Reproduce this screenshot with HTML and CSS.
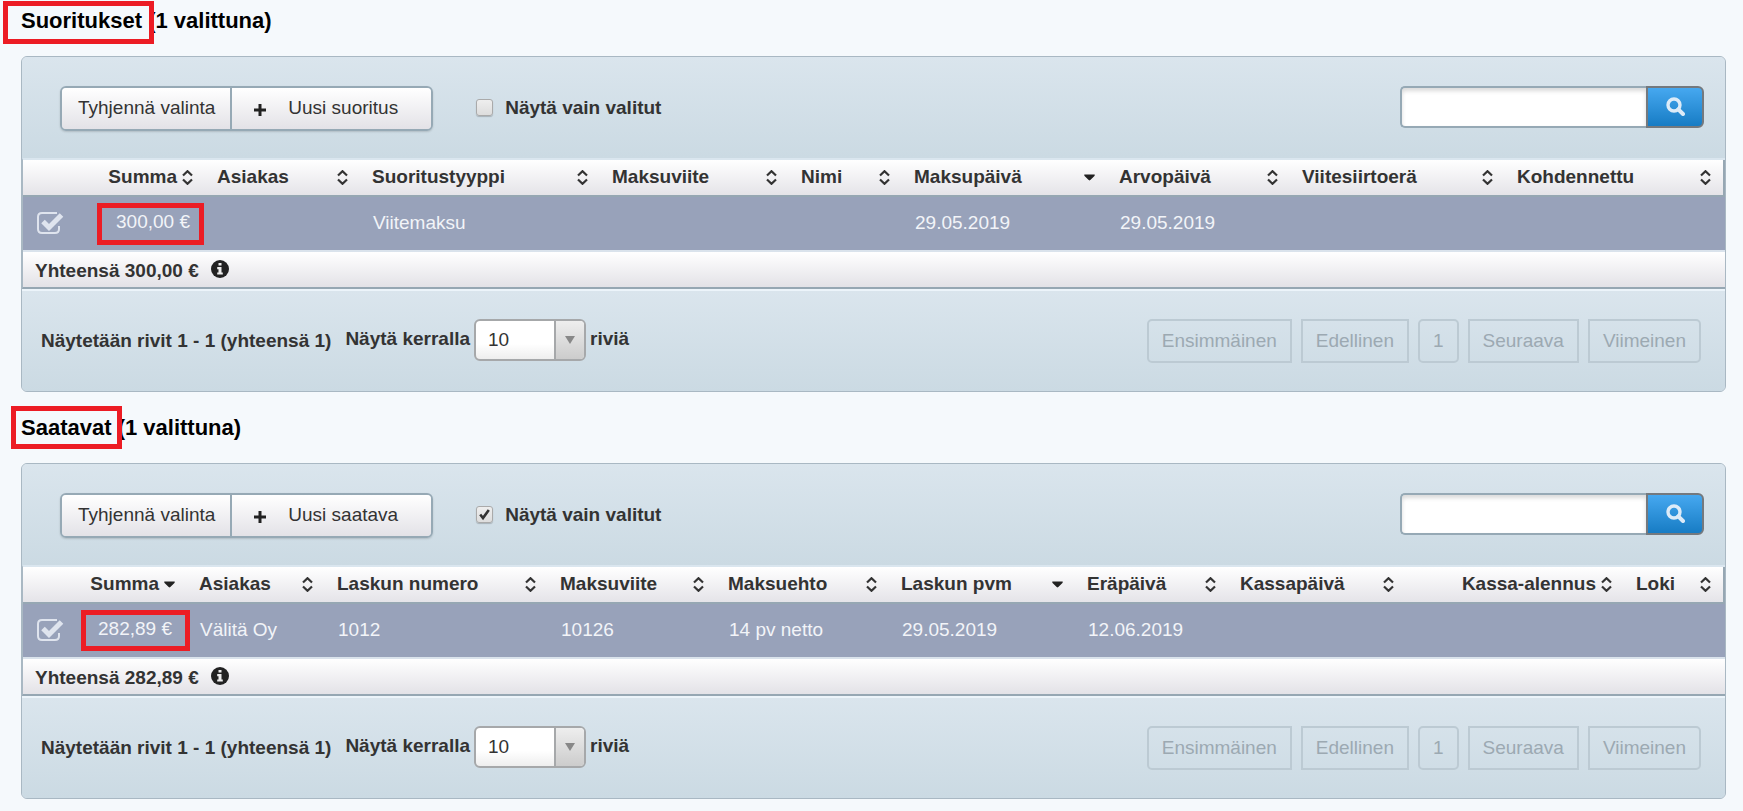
FILE: index.html
```
<!DOCTYPE html>
<html lang="fi">

<head>
    <meta charset="UTF-8">
    <meta name="viewport" content="width=device-width, initial-scale=1.0">
    <title>Suoritukset ja saatavat</title>
    <link rel="stylesheet" href="styles.css">
</head>

<body>
    <svg class="symbols" aria-hidden="true">
        <symbol id="icon-sort" viewBox="0 0 11 15">
            <path d="M1 5.5 L5.5 1.2 L10 5.5 M1 9.5 L5.5 13.8 L10 9.5" fill="none" stroke="#333" stroke-width="2.2" />
        </symbol>
        <symbol id="icon-sorted" viewBox="0 0 11 15">
            <path d="M0.3 4.5 H10.7 Q11 5.5 10.2 6.2 L6.3 10 Q5.5 10.8 4.7 10 L0.8 6.2 Q0 5.5 0.3 4.5Z" fill="#222" />
        </symbol>
        <symbol id="icon-plus" viewBox="0 0 12 12">
            <path d="M6 0 V12 M0 6 H12" fill="none" stroke="#222" stroke-width="3" />
        </symbol>
        <symbol id="icon-search" viewBox="0 0 19 19">
            <circle cx="8" cy="8" r="6" fill="none" stroke="#dcebf8" stroke-width="3.4" />
            <path d="M12.3 12.3 L17 17" stroke="#dcebf8" stroke-width="4" stroke-linecap="round" />
        </symbol>
        <symbol id="icon-info" viewBox="0 0 18 18">
            <circle cx="9" cy="9" r="9" fill="#222" />
            <path d="M7.5 3 H10.5 V5.6 H7.5Z M6.2 7 H10.5 V12.4 H11.8 V14.6 H6.2 V12.4 H7.5 V9.2 H6.2Z" fill="#eee" />
        </symbol>
    </svg>

    <section class="list">
        <h2><span class="mark mark-title">Suoritukset</span> (1 valittuna)</h2>
        <div class="panel">
            <div class="toolbar">
                <div class="button-group">
                    <button type="button">Tyhjennä valinta</button>
                    <button type="button" class="new"><svg class="plus"><use href="#icon-plus" /></svg>Uusi suoritus</button>
                </div>
                <label class="only-selected"><input type="checkbox">Näytä vain valitut</label>
                <form class="search">
                    <input type="text" aria-label="Haku">
                    <button type="button" aria-label="Hae"><svg><use href="#icon-search" /></svg></button>
                </form>
            </div>
            <table class="payments">
                <colgroup>
                    <col class="c-check"><col class="c-sum"><col class="c-customer"><col class="c-type"><col class="c-ref">
                    <col class="c-name"><col class="c-paid"><col class="c-value"><col class="c-batch"><col class="c-target">
                </colgroup>
                <thead>
                    <tr>
                        <th></th>
                        <th class="amount"><button type="button">Summa<svg><use href="#icon-sort" /></svg></button></th>
                        <th><button type="button">Asiakas<svg><use href="#icon-sort" /></svg></button></th>
                        <th><button type="button">Suoritustyyppi<svg><use href="#icon-sort" /></svg></button></th>
                        <th><button type="button">Maksuviite<svg><use href="#icon-sort" /></svg></button></th>
                        <th><button type="button">Nimi<svg><use href="#icon-sort" /></svg></button></th>
                        <th><button type="button">Maksupäivä<svg><use href="#icon-sorted" /></svg></button></th>
                        <th><button type="button">Arvopäivä<svg><use href="#icon-sort" /></svg></button></th>
                        <th><button type="button">Viitesiirtoerä<svg><use href="#icon-sort" /></svg></button></th>
                        <th><button type="button">Kohdennettu<svg><use href="#icon-sort" /></svg></button></th>
                    </tr>
                </thead>
                <tbody>
                    <tr>
                        <td class="pick"><input type="checkbox" aria-label="Valitse rivi" checked></td>
                        <td class="amount"><span class="mark mark-sum">300,00 €</span></td>
                        <td></td>
                        <td>Viitemaksu</td>
                        <td></td>
                        <td></td>
                        <td>29.05.2019</td>
                        <td>29.05.2019</td>
                        <td></td>
                        <td></td>
                    </tr>
                </tbody>
            </table>
            <div class="total">Yhteensä 300,00 €<svg><use href="#icon-info" /></svg></div>
            <div class="footer">
                <span>Näytetään rivit 1 - 1 (yhteensä 1)</span>
                <div class="page-size">
                    <label for="rows1">Näytä kerralla</label>
                    <span class="select"><select id="rows1"><option>10</option><option>25</option><option>50</option></select></span>
                    <span>riviä</span>
                </div>
                <div class="pages">
                    <button type="button" class="first" disabled>Ensimmäinen</button>
                    <button type="button" disabled>Edellinen</button>
                    <button type="button" class="number" disabled>1</button>
                    <button type="button" disabled>Seuraava</button>
                    <button type="button" class="last" disabled>Viimeinen</button>
                </div>
            </div>
        </div>
    </section>

    <section class="list">
        <h2><span class="mark mark-title">Saatavat</span> (1 valittuna)</h2>
        <div class="panel">
            <div class="toolbar">
                <div class="button-group">
                    <button type="button">Tyhjennä valinta</button>
                    <button type="button" class="new"><svg class="plus"><use href="#icon-plus" /></svg>Uusi saatava</button>
                </div>
                <label class="only-selected"><input type="checkbox" checked>Näytä vain valitut</label>
                <form class="search">
                    <input type="text" aria-label="Haku">
                    <button type="button" aria-label="Hae"><svg><use href="#icon-search" /></svg></button>
                </form>
            </div>
            <table class="receivables">
                <colgroup>
                    <col class="c-check"><col class="c-sum"><col class="c-customer"><col class="c-invoice"><col class="c-ref"><col class="c-terms">
                    <col class="c-date"><col class="c-due"><col class="c-cashdate"><col class="c-discount"><col class="c-log">
                </colgroup>
                <thead>
                    <tr>
                        <th></th>
                        <th class="amount"><button type="button">Summa<svg><use href="#icon-sorted" /></svg></button></th>
                        <th><button type="button">Asiakas<svg><use href="#icon-sort" /></svg></button></th>
                        <th><button type="button">Laskun numero<svg><use href="#icon-sort" /></svg></button></th>
                        <th><button type="button">Maksuviite<svg><use href="#icon-sort" /></svg></button></th>
                        <th><button type="button">Maksuehto<svg><use href="#icon-sort" /></svg></button></th>
                        <th><button type="button">Laskun pvm<svg><use href="#icon-sorted" /></svg></button></th>
                        <th><button type="button">Eräpäivä<svg><use href="#icon-sort" /></svg></button></th>
                        <th><button type="button">Kassapäivä<svg><use href="#icon-sort" /></svg></button></th>
                        <th class="amount"><button type="button">Kassa-alennus<svg><use href="#icon-sort" /></svg></button></th>
                        <th><button type="button">Loki<svg><use href="#icon-sort" /></svg></button></th>
                    </tr>
                </thead>
                <tbody>
                    <tr>
                        <td class="pick"><input type="checkbox" aria-label="Valitse rivi" checked></td>
                        <td class="amount"><span class="mark mark-sum">282,89 €</span></td>
                        <td>Välitä Oy</td>
                        <td>1012</td>
                        <td>10126</td>
                        <td>14 pv netto</td>
                        <td>29.05.2019</td>
                        <td>12.06.2019</td>
                        <td></td>
                        <td></td>
                        <td></td>
                    </tr>
                </tbody>
            </table>
            <div class="total">Yhteensä 282,89 €<svg><use href="#icon-info" /></svg></div>
            <div class="footer">
                <span>Näytetään rivit 1 - 1 (yhteensä 1)</span>
                <div class="page-size">
                    <label for="rows2">Näytä kerralla</label>
                    <span class="select"><select id="rows2"><option>10</option><option>25</option><option>50</option></select></span>
                    <span>riviä</span>
                </div>
                <div class="pages">
                    <button type="button" class="first" disabled>Ensimmäinen</button>
                    <button type="button" disabled>Edellinen</button>
                    <button type="button" class="number" disabled>1</button>
                    <button type="button" disabled>Seuraava</button>
                    <button type="button" class="last" disabled>Viimeinen</button>
                </div>
            </div>
        </div>
    </section>
</body>

</html>
```
FILE: styles.css
```
* {
    box-sizing: border-box;
}

body {
    margin: 0;
    padding: 0 17px 0 21px;
    background-color: #f5f9fc;
    color: #333;
    font-family: "Liberation Sans", Arial, sans-serif;
    font-size: 19px;
    line-height: 22px;
}

button,
input,
select {
    margin: 0;
    font: inherit;
    color: inherit;
}

svg {
    display: block;
    flex: none;
}

.symbols {
    position: absolute;
    width: 0;
    height: 0;
}

.list + .list {
    margin-top: 15px;
}

.list h2 {
    margin: 0;
    padding: 8px 0 22px;
    color: #000;
    font-size: 22px;
    line-height: 26px;
}

/* red frames around the highlighted texts */
.mark {
    position: relative;
}

.mark::after {
    content: "";
    position: absolute;
    border: 5px solid #ec1c24;
}

.mark-title::after {
    inset: -7px -12px -11px -18px;
}

.list + .list .mark-title::after {
    inset: -9px -10px -9px -10px;
}

.mark-sum::after {
    inset: -8px -14px -13px -19px;
}

.list + .list .mark-sum::after {
    inset: -8px -18px -12px -17px;
}

.panel {
    border: 1px solid #a9b8c3;
    border-radius: 6px;
    overflow: hidden;
    background-color: #d9e4ed;
}

.toolbar,
.footer {
    display: flex;
    align-items: center;
    background: linear-gradient(#dae5ed, #cbdae3);
}

/* toolbar */
.toolbar {
    height: 101px;
    padding: 0 21px 0 38px;
}

.button-group {
    display: flex;
    height: 45px;
    margin-top: 2px;
    border: 2px solid #96a9b5;
    border-radius: 6px;
    overflow: hidden;
    box-shadow: 0 1px 2px rgba(0, 0, 0, 0.15);
}

.button-group button {
    display: flex;
    align-items: center;
    padding: 0 15px 2px 16px;
    border: none;
    background: linear-gradient(#fff, #e3e2e7);
    white-space: nowrap;
}

.button-group .new {
    padding: 0 33px 2px 22px;
    border-left: 2px solid #96a9b5;
}

.plus {
    width: 12px;
    height: 12px;
    margin: 4px 22px 0 0;
}

.only-selected {
    display: flex;
    align-items: center;
    margin-left: 43px;
    font-weight: bold;
}

.only-selected input {
    appearance: none;
    width: 17px;
    height: 17px;
    margin-right: 12px;
    border: 1px solid #aaa;
    border-radius: 3px;
    background: linear-gradient(#eee, #ddd);
    box-shadow: 0 1px 1px rgba(0, 0, 0, 0.2);
}

.only-selected input:checked {
    background: url("data:image/svg+xml,%3Csvg xmlns='http://www.w3.org/2000/svg' viewBox='0 0 15 15'%3E%3Cpath d='M3.2 7.5 L6 11 L11.8 3' fill='none' stroke='%23333' stroke-width='2.6'/%3E%3C/svg%3E"), linear-gradient(#eee, #ddd);
}

.search {
    display: flex;
    height: 42px;
    margin: 0 0 2px auto;
}

.search input {
    width: 246px;
    padding: 0 10px;
    border: 2px solid #96a9b5;
    border-right: none;
    border-radius: 5px 0 0 5px;
    background-color: #fff;
    box-shadow: inset 0 3px 4px rgba(0, 0, 0, 0.15);
}

.search button {
    display: flex;
    align-items: center;
    justify-content: center;
    width: 58px;
    padding: 0;
    border: 2px solid #74797e;
    border-radius: 0 6px 6px 0;
    background: linear-gradient(#46a8f0, #177cc4);
}

.search svg {
    width: 19px;
    height: 19px;
}

/* table */
table {
    width: 100%;
    table-layout: fixed;
    border-collapse: separate;
    border-spacing: 0;
    border-top: 2px solid #dae6ef;
    border-left: 1px solid #a9b8c3;
}

thead tr {
    height: 37px;
    background: linear-gradient(#fff, #e3e2e7);
}

th {
    padding: 0 12px 2px;
    border-bottom: 2px solid #96a7b3;
}

th:last-child {
    border-right: 2px solid #96a7b3;
}

th button {
    display: flex;
    align-items: center;
    justify-content: space-between;
    width: 100%;
    padding: 0;
    border: none;
    background: none;
    font-weight: bold;
    white-space: nowrap;
}

th svg {
    width: 11px;
    height: 15px;
    margin-top: 2px;
}

th.amount button {
    justify-content: flex-end;
    gap: 5px;
}

tbody tr {
    height: 55px;
    background-color: #98a2ba;
}

td {
    padding: 0 13px 2px;
    border-bottom: 2px solid #dae3ec;
    color: #f2f4f8;
    white-space: nowrap;
}

td.amount {
    padding: 0 15px 3px 0;
    text-align: right;
}

.pick input {
    appearance: none;
    display: block;
    width: 28px;
    height: 24px;
    background: url("data:image/svg+xml,%3Csvg xmlns='http://www.w3.org/2000/svg' viewBox='0 0 28 24'%3E%3Cpath d='M21 2 H6 Q2 2 2 6 V18 Q2 22 6 22 H19 Q23 22 23 18 V15' fill='none' stroke='%23dfe4ee' stroke-width='2'/%3E%3Cpath d='M7 10.5 L13 16.5 L25.5 4' fill='none' stroke='%23dfe4ee' stroke-width='5'/%3E%3C/svg%3E");
}

.c-check { width: 75px; }
.c-sum { width: 107px; }
.c-customer { width: 155px; }
.c-type { width: 240px; }
.c-ref { width: 189px; }
.c-name { width: 113px; }
.c-paid { width: 205px; }
.c-value { width: 183px; }
.c-batch { width: 215px; }
.c-target { width: 220px; }

.receivables .c-check { width: 59px; }
.receivables .c-sum { width: 105px; }
.receivables .c-customer { width: 138px; }
.receivables .c-ref { width: 168px; }
.c-invoice { width: 223px; }
.c-terms { width: 173px; }
.c-date { width: 186px; }
.c-due { width: 153px; }
.c-cashdate { width: 178px; }
.c-discount { width: 218px; }
.c-log { width: 101px; }

.total {
    display: flex;
    align-items: center;
    height: 37px;
    padding: 2px 0 0 12px;
    border-left: 1px solid #a9b8c3;
    border-bottom: 2px solid #96a7b3;
    background: linear-gradient(#fff, #e3e2e7);
    font-weight: bold;
}

.total svg {
    width: 18px;
    height: 18px;
    margin: 0 0 4px 12px;
}

/* footer */
.footer {
    height: 102px;
    padding: 0 24px 0 19px;
    border-top: 2px solid #ecf4fa;
    font-weight: bold;
    white-space: nowrap;
}

.page-size {
    display: flex;
    align-items: center;
    gap: 4px;
    margin: 0 0 2px 14px;
}

.page-size > label,
.page-size > span:last-child {
    padding-bottom: 3px;
}

.select {
    position: relative;
}

.select select {
    appearance: none;
    display: block;
    width: 112px;
    height: 42px;
    padding: 0 40px 0 12px;
    border: 2px solid #a6a8aa;
    border-radius: 6px;
    background: linear-gradient(#fff 60%, #eee);
    font-weight: normal;
}

.select::after {
    content: "";
    position: absolute;
    top: 2px;
    right: 2px;
    width: 28px;
    height: 38px;
    border-left: 2px solid #a6a8aa;
    border-radius: 0 4px 4px 0;
    background: url("data:image/svg+xml,%3Csvg xmlns='http://www.w3.org/2000/svg' viewBox='0 0 10 8'%3E%3Cpath d='M0 0 H10 L5 8Z' fill='%23888'/%3E%3C/svg%3E") center / 10px 8px no-repeat, linear-gradient(#eee, #ccc);
    pointer-events: none;
}

.pages {
    display: flex;
    gap: 9px;
    margin-left: auto;
}

.pages button {
    height: 44px;
    padding: 0 13px;
    border: 2px solid #bccad3;
    background: none;
    color: #9ca9b2;
    font-weight: normal;
}

.pages .first {
    border-radius: 5px 0 0 5px;
}

.pages .number {
    border-radius: 5px;
}

.pages .last {
    border-radius: 0 5px 5px 0;
}
```
